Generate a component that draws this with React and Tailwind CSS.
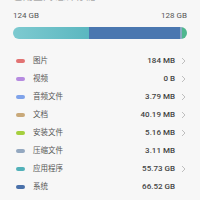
const items = [
  { label: "图片", value: "184 MB", color: "bg-[#e27373]", arrow: true },
  { label: "视频", value: "0 B", color: "bg-[#b68be0]", arrow: true },
  { label: "音频文件", value: "3.79 MB", color: "bg-[#7fa3ea]", arrow: true },
  { label: "文档", value: "40.19 MB", color: "bg-[#c9a97a]", arrow: true },
  { label: "安装文件", value: "5.16 MB", color: "bg-[#a5cf3e]", arrow: true },
  { label: "压缩文件", value: "3.11 MB", color: "bg-[#94a8c0]", arrow: false },
  { label: "应用程序", value: "55.73 GB", color: "bg-[#52b1b9]", arrow: true },
  { label: "系统", value: "66.52 GB", color: "bg-[#4a71aa]", arrow: false },
];

function Chevron() {
  return (
    <svg width="5" height="8" viewBox="0 0 5 8" className="shrink-0">
      <path d="M1 1 L4 4 L1 7" fill="none" stroke="#b8b8b8" strokeWidth="0.9" />
    </svg>
  );
}

export default function App() {
  return (
    <div
      className="w-[200px] h-[200px] overflow-hidden bg-[#f7f7f7] text-[#444]"
      style={{ fontFamily: "Roboto, 'Noto Sans CJK SC', sans-serif" }}
    >
      <div className="px-[13px] mt-[-9px] h-[12px] text-[10px] leading-[12px] text-[#aaa]">
        已用空间 总计存储
      </div>

      <div className="px-[13px] mt-[8px] flex justify-between text-[8px] leading-[10px] text-[#555]">
        <span>124 GB</span>
        <span>128 GB</span>
      </div>

      <div className="mx-[13px] mt-[6px] h-[12px] rounded-full overflow-hidden flex">
        <div className="w-[76px] bg-gradient-to-r from-[#7dcad0] to-[#5bb7c0]" />
        <div className="flex-1 bg-[#4a77b0]" />
        <div className="w-[2px] bg-[#8aa9c4]" />
        <div className="w-[5px] bg-[#4fb78f]" />
      </div>

      <div className="mt-[13px] flex flex-col">
        {items.map((it) => (
          <div key={it.label} className="h-[18px] flex items-center pl-[16px] pr-[14px]">
            <div className={`w-[9px] h-[4px] rounded-full ${it.color}`} />
            <span className="ml-[8px] text-[7.5px] text-[#555]">{it.label}</span>
            <span className="ml-auto text-[8px] font-medium text-[#444]">{it.value}</span>
            <div className="w-[11px] flex justify-end">{it.arrow && <Chevron />}</div>
          </div>
        ))}
      </div>
    </div>
  );
}
